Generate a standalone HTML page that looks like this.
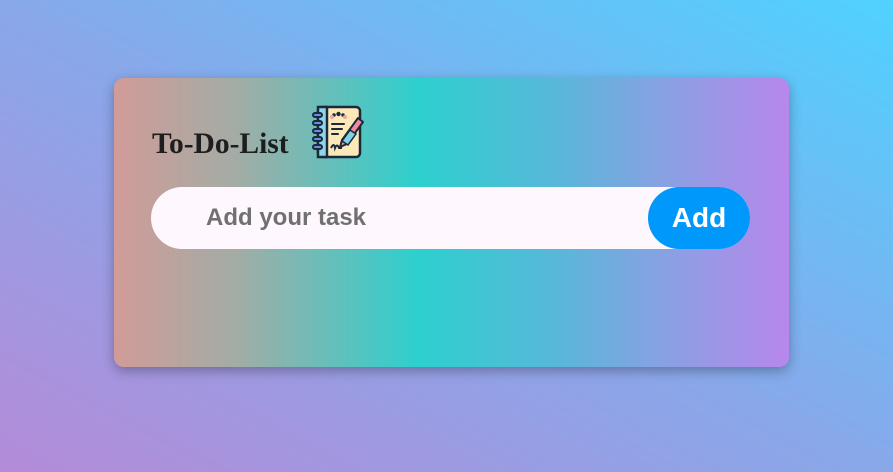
<!DOCTYPE html>
<html><head><style>
*{margin:0;padding:0;box-sizing:border-box}
html,body{width:893px;height:472px;overflow:hidden}
body{background:linear-gradient(to top right,#b48bd8 0%,#88a8ea 50%,#4fd2ff 100%);font-family:"Liberation Sans",sans-serif;position:relative}
.card{position:absolute;left:114px;top:78px;width:675px;height:289px;border-radius:10px;background:linear-gradient(to right,#d19b98 0%,#a3aca5 18%,#2dd0ce 45%,#57b8d9 65%,#84a3e2 80%,#b887ec 100%);box-shadow:0 4px 12px rgba(0,0,0,0.3)}
.title{position:absolute;left:38px;top:50px;font:bold 29.5px "Liberation Serif",serif;color:#1e1e1e}
.icon{position:absolute;left:198px;top:26px}
.input{position:absolute;left:37px;top:109px;width:599px;height:62px;border-radius:31px;background:#fef7fe}
.input span{position:absolute;left:55px;top:17px;font-weight:bold;font-size:24px;color:#707070}
.btn{position:absolute;left:534px;top:109px;width:102px;height:62px;border-radius:31px;background:#0098fa;color:#fff;font-weight:bold;font-size:28px;text-align:center;line-height:62px}
</style></head><body>
<div class="card">
<div class="title">To-Do-List</div>
<svg class="icon" width="54" height="56" viewBox="0 0 54 56">
<rect x="6" y="3" width="42" height="50" rx="4" fill="#fde9b8" stroke="#1b2a3a" stroke-width="2.5"/>
<rect x="6" y="3" width="9" height="50" fill="#8fd4ea" stroke="#1b2a3a" stroke-width="2.5"/>
<g stroke="#1b2a3a" stroke-width="2" fill="#6a8fe0">
<rect x="1" y="9" width="9" height="4" rx="2"/><rect x="1" y="17" width="9" height="4" rx="2"/><rect x="1" y="25" width="9" height="4" rx="2"/><rect x="1" y="33" width="9" height="4" rx="2"/><rect x="1" y="41" width="9" height="4" rx="2"/></g>
<circle cx="22" cy="11" r="1.8" fill="#1b2a3a"/><circle cx="31" cy="11" r="1.8" fill="#1b2a3a"/><circle cx="26.5" cy="10" r="2.2" fill="#1b2a3a"/>
<circle cx="20" cy="13" r="2" fill="#f4a0a8"/><circle cx="33" cy="13" r="2" fill="#f4a0a8"/>
<g stroke="#1b2a3a" stroke-width="2" stroke-linecap="round"><line x1="20" y1="20" x2="32" y2="20"/><line x1="20" y1="25" x2="30" y2="25"/><line x1="20" y1="30" x2="26" y2="30"/></g>
<path d="M19 44 q3-6 4 0 q2-5 4 0 l3 0" stroke="#1b2a3a" stroke-width="2" fill="none"/>
<path d="M46 14 l5 4 -16 22 -7 3 2 -7z" fill="#f28aa0" stroke="#1b2a3a" stroke-width="2" stroke-linejoin="round"/>
<path d="M38 26 l6 4 -8 11 -6-4z" fill="#7fd2e8" stroke="#1b2a3a" stroke-width="1.5"/>
</svg>
<div class="input"><span>Add your task</span></div>
<div class="btn">Add</div>
</div>
</body></html>
